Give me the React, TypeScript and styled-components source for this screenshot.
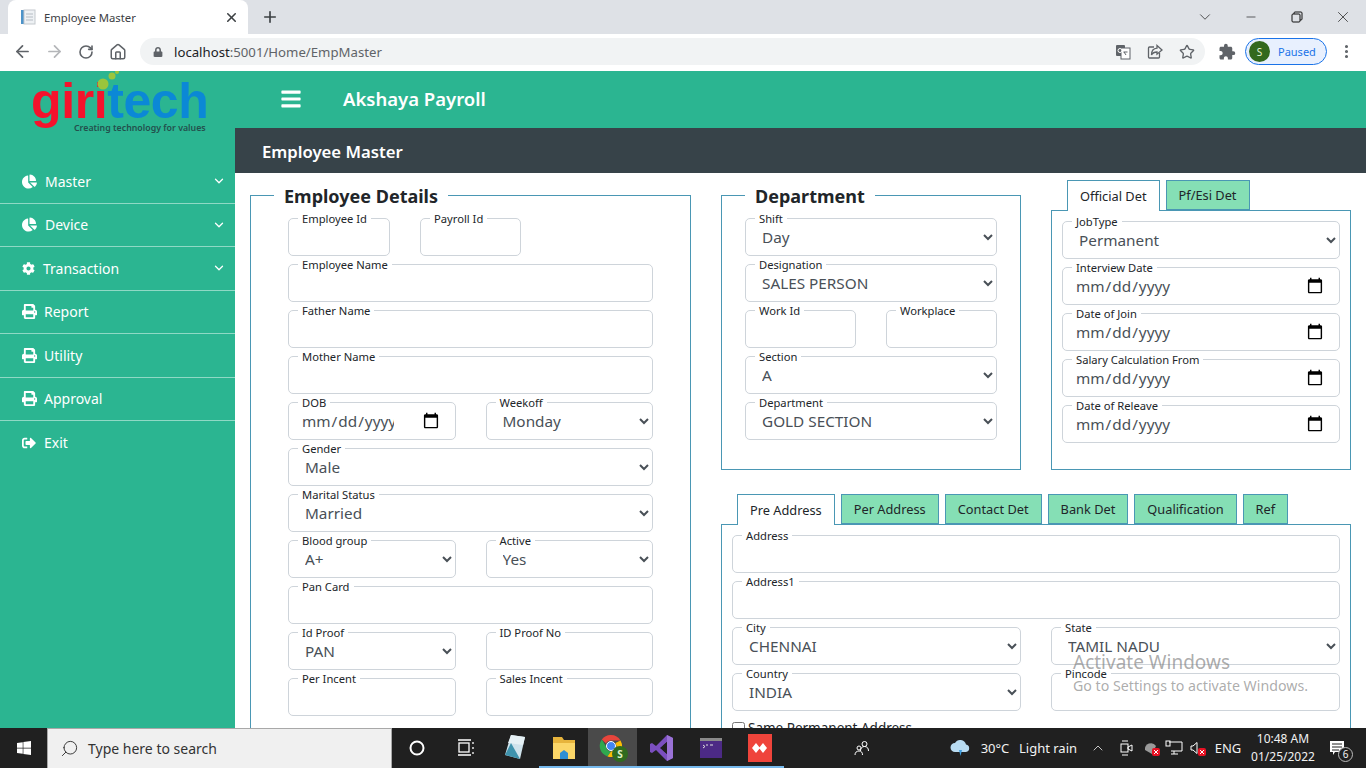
import React from 'react';
import styled, {createGlobalStyle} from 'styled-components';
import {FaBars, FaChartPie, FaCog, FaLock, FaPrint, FaSignOutAlt, FaWindows} from 'react-icons/fa';
import {MdExtension} from 'react-icons/md';
import {ArrowLeft, ArrowRight, ChevronDown, ChevronUp, Home, Minus, MoreVertical, Plus, RotateCw, Search, Star, X} from 'lucide-react';

const GREEN = '#2bb591';
const LINE = '#4a97b4';
const UI_FONT = '"Noto Sans", "Open Sans", sans-serif';

const GlobalStyle = createGlobalStyle`
  html, body {
    margin: 0;
    height: 100%;
    overflow: hidden;
    font-family: ${UI_FONT};
    background: white;
  }
  * {
    box-sizing: border-box;
  }
`;

const Frame = styled.div`
  position: relative;
  width: 1366px;
  height: 768px;
  display: flex;
  flex-direction: column;
  overflow: hidden;
`;

/* browser chrome */
const TabStrip = styled.div`
  height: 34px;
  background: #dee1e6;
  display: flex;
  align-items: center;
  padding-left: 8px;
`;

const BrowserTab = styled.div`
  width: 240px;
  height: 34px;
  background: white;
  border-radius: 8px 8px 0 0;
  display: flex;
  align-items: center;
  padding: 0 9px 0 12px;
  font-size: 11.3px;
  color: #3c4043;
  gap: 8px;
`;

const BrowserTabTitle = styled.span`
  flex: 1;
`;

const NewTab = styled.div`
  width: 44px;
  display: flex;
  justify-content: center;
  color: #3c4043;
`;

const WindowControls = styled.div`
  margin-left: auto;
  display: flex;
  color: #222;
`;

const WindowButton = styled.div`
  width: 46px;
  height: 34px;
  display: flex;
  align-items: center;
  justify-content: center;
`;

const Toolbar = styled.div`
  height: 37px;
  background: white;
  display: flex;
  align-items: center;
  padding: 0 0 2px 6px;
  color: #5f6368;
`;

const NavButton = styled.div<{$muted?: boolean}>`
  width: 32px;
  display: flex;
  justify-content: center;
  color: ${p => (p.$muted ? '#b4b6b9' : '#5f6368')};
`;

const Omnibox = styled.div`
  width: 1065px;
  height: 27px;
  margin-left: 6px;
  background: #f1f3f4;
  border-radius: 14px;
  display: flex;
  align-items: center;
  padding: 0 2px 0 13px;
  font-size: 13.2px;
  color: #5f6368;
`;

const Url = styled.span`
  margin-left: 11px;
  flex: 1;
`;

const UrlHost = styled.span`
  color: #202124;
`;

const OmniIcon = styled.div`
  width: 32px;
  display: flex;
  justify-content: center;
`;

const ExtensionIcon = styled.div`
  width: 40px;
  padding-left: 3px;
  display: flex;
  justify-content: center;
`;

const ProfilePill = styled.div`
  width: 82px;
  height: 27px;
  border: 1px solid #1a73e8;
  border-radius: 14px;
  background: #e8f0fe;
  display: flex;
  align-items: center;
  padding-left: 3px;
  gap: 8px;
  font-size: 11px;
  color: #1a73e8;
`;

const Avatar = styled.span`
  width: 21px;
  height: 21px;
  border-radius: 50%;
  background: #33691e;
  color: #e6f4d7;
  font-size: 10px;
  display: flex;
  align-items: center;
  justify-content: center;
`;

const MenuDots = styled.div`
  width: 38px;
  display: flex;
  justify-content: center;
`;

/* page */
const Body = styled.div`
  flex: 1;
  min-height: 0;
  display: flex;
`;

const Sidebar = styled.aside`
  width: 235px;
  flex-shrink: 0;
  background: ${GREEN};
  color: white;
`;

const Logo = styled.div`
  position: relative;
  height: 89px;
  padding: 3px 0 0 31px;
  font-family: "Liberation Sans", Arial, sans-serif;
`;

const LogoWord = styled.div`
  font-size: 50px;
  font-weight: bold;
  line-height: 48px;
  letter-spacing: -0.4px;
  margin-top: 3px;
`;

const LogoRed = styled.span`
  color: #f5122c;
`;

const LogoBlue = styled.span`
  color: #0b88d6;
`;

const LogoTag = styled.div`
  font-family: ${UI_FONT};
  font-size: 8.8px;
  line-height: 12px;
  color: #23504d;
  margin: -3px 0 0 43px;
  font-weight: 600;
  white-space: nowrap;
`;

const LogoDots = styled.svg`
  position: absolute;
  left: 92px;
  top: 0;
`;

const MenuList = styled.nav`
  display: flex;
  flex-direction: column;
`;

const MenuItem = styled.a<{$last?: boolean}>`
  height: 43.5px;
  display: flex;
  align-items: center;
  padding: 0 9px 0 22px;
  font-size: 14px;
  color: white;
  border-bottom: ${p => (p.$last ? 'none' : '1px solid #8fd9c5')};
`;

const MenuIcon = styled.span<{$gap: number}>`
  width: ${p => p.$gap}px;
  display: flex;
  align-items: center;
`;

const MenuText = styled.span`
  flex: 1;
`;

const Main = styled.main`
  flex: 1;
  min-width: 0;
  display: flex;
  flex-direction: column;
`;

const TopBar = styled.header`
  height: 57px;
  background: ${GREEN};
  color: white;
  display: flex;
  align-items: center;
  padding: 0 0 2px 45px;
  font-size: 18.5px;
  font-weight: 600;
`;

const TopTitle = styled.span`
  margin-left: 41px;
`;

const TitleBar = styled.div`
  height: 45px;
  background: #374349;
  color: white;
  display: flex;
  align-items: center;
  padding: 2px 0 0 27px;
  font-size: 16.7px;
  font-weight: 600;
`;

const Content = styled.div`
  flex: 1;
  min-height: 0;
  overflow: hidden;
  background: white;
  padding: 7px 0 0 15px;
  display: grid;
  grid-template-columns: 441px 300px 300px;
  grid-template-rows: 290px 1fr;
  column-gap: 30px;
  row-gap: 24px;
  align-content: start;
`;

const Section = styled.fieldset<{$left: number; $right: number}>`
  margin: 2px 0 0;
  min-width: 0;
  border: 1px solid ${LINE};
  padding: 9px ${p => p.$right}px 0 ${p => p.$left}px;
`;

const EmployeeSection = styled(Section)`
  grid-row: 1 / span 2;
  height: 640px;
`;

const SectionTitle = styled.legend<{$offset: number}>`
  margin-left: ${p => p.$offset}px;
  padding: 1px 10px 0;
  font-size: 18px;
  line-height: 26px;
  font-weight: 700;
  color: #212529;
`;

const Rows = styled.div`
  display: grid;
  grid-auto-rows: 38px;
  row-gap: 8px;
`;

const Row = styled.div<{$gap: number}>`
  display: flex;
  gap: ${p => p.$gap}px;
`;

const Field = styled.div<{$width?: number}>`
  position: relative;
  height: 38px;
  border: 1px solid #ced4da;
  border-radius: 5px;
  background: white;
  flex: ${p => (p.$width ? `0 0 ${p.$width}px` : '1 1 0')};
  min-width: 0;
`;

const FieldLabel = styled.label`
  position: absolute;
  top: -8px;
  left: 9px;
  padding: 0 4px;
  background: white;
  font-size: 11.2px;
  line-height: 15px;
  color: #212529;
  white-space: nowrap;
`;

const TextBox = styled.input`
  width: 100%;
  height: 100%;
  border: 0;
  outline: 0;
  background: transparent;
  padding: 0 12px;
  font-family: ${UI_FONT};
  font-size: 15.3px;
  color: #495057;
`;

const DateBox = styled(TextBox)`
  padding: 0 15px 0 12px;

  &::-webkit-calendar-picker-indicator {
    width: 18px;
    height: 18px;
    padding: 0;
    margin-left: 28px;
  }
`;

const SelectBox = styled.select`
  width: 100%;
  height: 100%;
  border: 0;
  outline: 0;
  background: transparent;
  padding: 0 8px 0 12px;
  font-family: ${UI_FONT};
  font-size: 15.3px;
  color: #495057;
`;

const TabColumn = styled.div<{$span?: number}>`
  min-width: 0;
  grid-column: ${p => (p.$span ? `span ${p.$span}` : 'auto')};
`;

const TabBar = styled.div<{$indent: number}>`
  position: relative;
  z-index: 1;
  display: flex;
  gap: 6px;
  padding-left: ${p => p.$indent}px;
  height: 31px;
  margin-bottom: -1px;
`;

const TabItem = styled.div<{$active?: boolean}>`
  height: ${p => (p.$active ? '31px' : '30px')};
  padding: 0 12px ${p => (p.$active ? '1px' : '0')};
  display: flex;
  align-items: center;
  font-size: 12.8px;
  color: #212529;
  background: ${p => (p.$active ? 'white' : '#85dfb5')};
  border: 1px solid ${LINE};
  border-bottom: ${p => (p.$active ? '0' : `1px solid ${LINE}`)};
`;

const TabPanel = styled.div`
  border: 1px solid ${LINE};
  padding: 10px 10px 0;
  height: 260px;
`;

const CheckRow = styled.label`
  display: flex;
  align-items: center;
  gap: 3px;
  margin-top: 8px;
  font-size: 13.5px;
  color: #212529;
`;

const CheckBox = styled.input`
  width: 13px;
  height: 13px;
  margin: 0;
`;

/* taskbar */
const Taskbar = styled.footer`
  height: 40px;
  flex-shrink: 0;
  background: #202020;
  color: white;
  display: flex;
  align-items: center;
  position: relative;
  z-index: 2;
`;

const StartButton = styled.div`
  width: 47px;
  display: flex;
  justify-content: center;
`;

const SearchBox = styled.div`
  width: 345px;
  height: 40px;
  background: #f0f0f0;
  border: 1px solid #a8a8a8;
  border-bottom: 0;
  display: flex;
  align-items: center;
  padding-left: 12px;
  gap: 9px;
  font-size: 14px;
  color: #333;
`;

const FlippedIcon = styled.span`
  display: flex;
  transform: scaleX(-1);
`;

const TaskButton = styled.div<{$open?: boolean; $active?: boolean}>`
  width: 49px;
  height: 40px;
  display: flex;
  align-items: center;
  justify-content: center;
  background: ${p => (p.$active ? '#4a4a4a' : 'transparent')};
  border-bottom: 2px solid ${p => (p.$open ? '#76b9ed' : 'transparent')};
  padding-top: 2px;
`;

const TrayItem = styled.div<{$width: number; $before?: number}>`
  width: ${p => p.$width}px;
  margin-left: ${p => p.$before ?? 0}px;
  display: flex;
  justify-content: center;
  align-items: center;
  flex-shrink: 0;
  font-size: 13px;
  color: #f2f2f2;
  white-space: nowrap;
`;

const ClockText = styled.div`
  display: flex;
  flex-direction: column;
  align-items: center;
  font-size: 12px;
  line-height: 18px;
`;

const NotifyBadge = styled.span`
  position: absolute;
  right: -8px;
  bottom: -6px;
  width: 15px;
  height: 15px;
  border-radius: 50%;
  background: #202020;
  border: 1px solid #bbb;
  font-size: 10px;
  display: flex;
  align-items: center;
  justify-content: center;
`;

const NotifyIcon = styled.span`
  position: relative;
  display: flex;
`;

const Watermark = styled.div`
  position: absolute;
  left: 1073px;
  top: 649px;
  color: rgba(120, 120, 120, 0.62);
  pointer-events: none;
  font-size: 14.2px;
  line-height: 19px;
  z-index: 1;
`;

const WatermarkTitle = styled.div`
  font-size: 19px;
  line-height: 27px;
`;

/* small drawings */
const FavIcon = () => (
  <svg width="16" height="16" viewBox="0 0 16 16">
    <rect x="1" y="1" width="5" height="14" fill="#4c93c9" />
    <rect x="4" y="1" width="11" height="14" fill="#eef1f4" stroke="#c3c8cd" />
    <path d="M6 5h7M6 8h7M6 11h7" stroke="#b5bcc3" />
  </svg>
);

const RestoreIcon = () => (
  <svg width="12" height="12" viewBox="0 0 12 12" fill="none" stroke="#111" strokeWidth="1">
    <rect x="1" y="3" width="8" height="8" rx="1" />
    <path d="M3 3V2a1 1 0 0 1 1-1h6a1 1 0 0 1 1 1v6a1 1 0 0 1-1 1H9" />
  </svg>
);

const TranslateIcon = () => (
  <svg width="16" height="16" viewBox="0 0 16 16">
    <rect x="1" y="1" width="9" height="11" fill="#5f6368" rx="1" />
    <rect x="6" y="4" width="9" height="11" fill="white" stroke="#5f6368" />
    <circle cx="5" cy="6.5" r="2" fill="none" stroke="white" />
    <path d="M8.5 8h4M11 11l-2-3" stroke="#5f6368" fill="none" />
  </svg>
);

const ShareIcon = () => (
  <svg width="16" height="16" viewBox="0 0 16 16" fill="none" stroke="#5f6368" strokeWidth="1.3">
    <path d="M7 3H2.5a1 1 0 0 0-1 1v9a1 1 0 0 0 1 1h9a1 1 0 0 0 1-1V9" />
    <path d="M10 1.5 15 6l-5 4.2V8C7 8 5.5 9 4.5 11c0-4 2-6.5 5.5-6.8z" />
  </svg>
);

const TaskViewIcon = () => (
  <svg width="18" height="20" viewBox="0 0 18 20" fill="none" stroke="white" strokeWidth="1.3">
    <rect x="2" y="5" width="10" height="9" />
    <path d="M1 2h13M1 17h13M16 4v2M16 9v2M16 14v2" />
  </svg>
);

const NotepadIcon = () => (
  <svg width="24" height="30" viewBox="0 0 24 30">
    <path d="M8 2 22 4 17 26 2 22z" fill="#cfe3ec" />
    <path d="M8 2 22 4 20 12 5 10z" fill="#e6f1f5" />
    <path d="M2 22 8 10 17 26z" fill="#3f93ad" />
  </svg>
);

const FolderIcon = () => (
  <svg width="22" height="26" viewBox="0 0 22 26">
    <path d="M0 2h9l2 3h11v19H0z" fill="#e7b43c" />
    <rect x="0" y="8" width="22" height="16" fill="#fbd668" />
    <path d="M7 24v-6l4-3 4 3v6z" fill="#2f8fd3" />
  </svg>
);

const ChromeIcon = () => (
  <svg width="32" height="32" viewBox="0 0 32 32">
    <path d="M14 3a11 11 0 0 1 9.5 5.500H14a5.500 5.500 0 0 0-5 3L4.800 7.500A11 11 0 0 1 14 3z" fill="#e8453c" />
    <path d="M4.800 7.500 9 14.500a5.500 5.500 0 0 0 5 5l-3.500 4.900A11 11 0 0 1 4.800 7.500z" fill="#2fa84f" />
    <path d="M23.500 8.500A11 11 0 0 1 10.500 24.400L14 19.500a5.500 5.500 0 0 0 4.500-8.500z" fill="#fbbc05" />
    <circle cx="14" cy="14" r="4.500" fill="#4285f4" stroke="white" />
    <circle cx="23" cy="22" r="8" fill="#2f6b1f" />
    <text x="23" y="25.500" fontSize="10" fontWeight="bold" fill="#dff0c8" textAnchor="middle">S</text>
  </svg>
);

const StudioIcon = () => (
  <svg width="24" height="28" viewBox="0 0 24 28">
    <path d="M17 1 23 4v20l-6 3L6 16 2 19 0 18V10l2-1 4 3z" fill="#7b4fc0" />
    <path d="M17 8v12l-7-6z" fill="#202020" />
    <path d="M17 1 23 4v20l-6 3z" fill="#9a72d6" />
    <path d="M17 8v12l-4-3.500v-5z" fill="#202020" />
  </svg>
);

const TerminalIcon = () => (
  <svg width="22" height="20" viewBox="0 0 22 20">
    <rect width="22" height="20" fill="#8a8a8a" />
    <rect y="3" width="22" height="17" fill="#4c2a85" />
    <path d="M3 7l2 1.500L3 10M6 7h2M10 7h3" stroke="#ddd" fill="none" />
  </svg>
);

const AnyDeskIcon = () => (
  <svg width="24" height="28" viewBox="0 0 24 28">
    <rect width="24" height="28" fill="#ef443b" />
    <path d="M8 9 12 14 8 19 4 14z M15 9 19 14 15 19 11 14z" fill="white" />
  </svg>
);

const CortanaIcon = () => (
  <svg width="16" height="16" viewBox="0 0 16 16" fill="none" stroke="white" strokeWidth="2">
    <circle cx="8" cy="8" r="6.500" />
  </svg>
);

const PeopleIcon = () => (
  <svg width="16" height="16" viewBox="0 0 16 16" fill="none" stroke="white" strokeWidth="1">
    <circle cx="10.500" cy="4" r="2.500" />
    <path d="M6.500 11c0-3 1.500-4.500 4-4.500s4 1.500 4 4.500" />
    <circle cx="5" cy="8" r="2" />
    <path d="M1 15c0-2.500 1.500-4 4-4s3.500 1.500 3.500 4" />
  </svg>
);

const WeatherIcon = () => (
  <svg width="22" height="18" viewBox="0 0 22 18">
    <path d="M6 13a4.500 4.500 0 0 1 0-9 6 6 0 0 1 11 1.500A3.800 3.800 0 0 1 17 13z" fill="#b9dcf2" />
    <path d="M10 11h3l-1.500 6z" fill="#3f9ee0" />
  </svg>
);

const MeetIcon = () => (
  <svg width="14" height="20" viewBox="0 0 14 20" fill="none" stroke="white" strokeWidth="1">
    <rect x="2" y="6" width="7" height="8" />
    <path d="M9 9l4-2v6l-4-2zM3 3h6M3 17h6" />
  </svg>
);

const RedCross = () => (
  <>
    <rect x="9" y="9" width="8" height="8" rx="2" fill="#e81123" />
    <path d="M11 11l4 4M15 11l-4 4" stroke="white" />
  </>
);

const NetworkIcon = () => (
  <svg width="18" height="18" viewBox="0 0 18 18">
    <path d="M2 11a6 6 0 0 1 11-4l-4 8z" fill="#9a9a9a" />
    <RedCross />
  </svg>
);

const DesktopIcon = () => (
  <svg width="18" height="16" viewBox="0 0 18 16" fill="none" stroke="white" strokeWidth="1">
    <path d="M4 2h13v9H6M9 11v3M6 14h7" />
    <rect x="1" y="1" width="4" height="5" />
  </svg>
);

const VolumeIcon = () => (
  <svg width="18" height="18" viewBox="0 0 18 18">
    <path d="M2 7h2l4-3.500v11L4 11H2z" fill="none" stroke="white" />
    <RedCross />
  </svg>
);

const NotifySvg = () => (
  <svg width="16" height="15" viewBox="0 0 16 15">
    <path d="M1 0h14v11H6l-2 3v-3H1z" fill="white" />
    <path d="M3 3h10M3 6h10M3 9h7" stroke="#202020" />
  </svg>
);

const menuItems = [
  {label: 'Master', icon: <FaChartPie size={15} />, gap: 23, arrow: true},
  {label: 'Device', icon: <FaChartPie size={15} />, gap: 23, arrow: true},
  {label: 'Transaction', icon: <FaCog size={13} />, gap: 21, arrow: true},
  {label: 'Report', icon: <FaPrint size={15} />, gap: 22},
  {label: 'Utility', icon: <FaPrint size={15} />, gap: 22},
  {label: 'Approval', icon: <FaPrint size={15} />, gap: 22},
  {label: 'Exit', icon: <FaSignOutAlt size={14} />, gap: 22},
];

const Text: React.FC<{label: string; width?: number}> = ({label, width}) => (
  <Field $width={width}>
    <FieldLabel>{label}</FieldLabel>
    <TextBox type="text" />
  </Field>
);

const DateField: React.FC<{label: string; width?: number}> = ({label, width}) => (
  <Field $width={width}>
    <FieldLabel>{label}</FieldLabel>
    <DateBox type="date" />
  </Field>
);

const Choice: React.FC<{label: string; value: string; width?: number}> = ({label, value, width}) => (
  <Field $width={width}>
    <FieldLabel>{label}</FieldLabel>
    <SelectBox defaultValue={value}>
      <option>{value}</option>
    </SelectBox>
  </Field>
);

const App: React.FC = () => {
  return (
    <Frame>
      <GlobalStyle />
      <TabStrip>
        <BrowserTab>
          <FavIcon />
          <BrowserTabTitle>Employee Master</BrowserTabTitle>
          <X size={15} strokeWidth={2.5} />
        </BrowserTab>
        <NewTab><Plus size={18} strokeWidth={2.2} /></NewTab>
        <WindowControls>
          <WindowButton><ChevronDown size={18} strokeWidth={1} /></WindowButton>
          <WindowButton><Minus size={14} strokeWidth={1.2} /></WindowButton>
          <WindowButton><RestoreIcon /></WindowButton>
          <WindowButton><X size={18} strokeWidth={1} /></WindowButton>
        </WindowControls>
      </TabStrip>
      <Toolbar>
        <NavButton><ArrowLeft size={19} strokeWidth={2.2} /></NavButton>
        <NavButton $muted><ArrowRight size={19} strokeWidth={2.2} /></NavButton>
        <NavButton><RotateCw size={16} strokeWidth={2.4} /></NavButton>
        <NavButton><Home size={18} strokeWidth={2} /></NavButton>
        <Omnibox>
          <FaLock size={10} />
          <Url><UrlHost>localhost</UrlHost>:5001/Home/EmpMaster</Url>
          <OmniIcon><TranslateIcon /></OmniIcon>
          <OmniIcon><ShareIcon /></OmniIcon>
          <OmniIcon><Star size={16} strokeWidth={2} /></OmniIcon>
        </Omnibox>
        <ExtensionIcon><MdExtension size={18} /></ExtensionIcon>
        <ProfilePill><Avatar>S</Avatar>Paused</ProfilePill>
        <MenuDots><MoreVertical size={17} strokeWidth={2.4} /></MenuDots>
      </Toolbar>

      <Body>
        <Sidebar>
          <Logo>
            <LogoDots width="30" height="24" viewBox="0 0 30 24">
              <circle cx="11" cy="13" r="5.500" fill="#9ac53c" />
              <circle cx="20" cy="5" r="3.500" fill="#9ac53c" />
              <circle cx="25" cy="1" r="2" fill="#9ac53c" />
            </LogoDots>
            <LogoWord><LogoRed>giri</LogoRed><LogoBlue>tech</LogoBlue></LogoWord>
            <LogoTag>Creating technology for values</LogoTag>
          </Logo>
          <MenuList>
            {menuItems.map((item, i) => (
              <MenuItem key={item.label} $last={i === menuItems.length - 1}>
                <MenuIcon $gap={item.gap}>{item.icon}</MenuIcon>
                <MenuText>{item.label}</MenuText>
                {item.arrow && <ChevronDown size={14} strokeWidth={2.2} />}
              </MenuItem>
            ))}
          </MenuList>
        </Sidebar>

        <Main>
          <TopBar>
            <FaBars size={22} />
            <TopTitle>Akshaya Payroll</TopTitle>
          </TopBar>
          <TitleBar>Employee Master</TitleBar>
          <Content>
            <EmployeeSection $left={37} $right={37}>
              <SectionTitle $offset={-14}>Employee Details</SectionTitle>
              <Rows>
                <Row $gap={30}>
                  <Text label="Employee Id" width={102} />
                  <Text label="Payroll Id" width={101} />
                </Row>
                <Text label="Employee Name" />
                <Text label="Father Name" />
                <Text label="Mother Name" />
                <Row $gap={30}>
                  <DateField label="DOB" />
                  <Choice label="Weekoff" value="Monday" />
                </Row>
                <Choice label="Gender" value="Male" />
                <Choice label="Marital Status" value="Married" />
                <Row $gap={30}>
                  <Choice label="Blood group" value="A+" />
                  <Choice label="Active" value="Yes" />
                </Row>
                <Text label="Pan Card" />
                <Row $gap={30}>
                  <Choice label="Id Proof" value="PAN" />
                  <Text label="ID Proof No" />
                </Row>
                <Row $gap={30}>
                  <Text label="Per Incent" />
                  <Text label="Sales Incent" />
                </Row>
              </Rows>
            </EmployeeSection>

            <Section $left={23} $right={23}>
              <SectionTitle $offset={0}>Department</SectionTitle>
              <Rows>
                <Choice label="Shift" value="Day" />
                <Choice label="Designation" value="SALES PERSON" />
                <Row $gap={30}>
                  <Text label="Work Id" />
                  <Text label="Workplace" />
                </Row>
                <Choice label="Section" value="A" />
                <Choice label="Department" value="GOLD SECTION" />
              </Rows>
            </Section>

            <TabColumn>
              <TabBar $indent={16}>
                <TabItem $active>Official Det</TabItem>
                <TabItem>Pf/Esi Det</TabItem>
              </TabBar>
              <TabPanel>
                <Rows>
                  <Choice label="JobType" value="Permanent" />
                  <DateField label="Interview Date" />
                  <DateField label="Date of Join" />
                  <DateField label="Salary Calculation From" />
                  <DateField label="Date of Releave" />
                </Rows>
              </TabPanel>
            </TabColumn>

            <TabColumn $span={2}>
              <TabBar $indent={16}>
                <TabItem $active>Pre Address</TabItem>
                <TabItem>Per Address</TabItem>
                <TabItem>Contact Det</TabItem>
                <TabItem>Bank Det</TabItem>
                <TabItem>Qualification</TabItem>
                <TabItem>Ref</TabItem>
              </TabBar>
              <TabPanel>
                <Rows>
                  <Text label="Address" />
                  <Text label="Address1" />
                  <Row $gap={30}>
                    <Choice label="City" value="CHENNAI" />
                    <Choice label="State" value="TAMIL NADU" />
                  </Row>
                  <Row $gap={30}>
                    <Choice label="Country" value="INDIA" />
                    <Text label="Pincode" />
                  </Row>
                </Rows>
                <CheckRow><CheckBox type="checkbox" />Same Permanent Address</CheckRow>
              </TabPanel>
            </TabColumn>
          </Content>
        </Main>
      </Body>

      <Taskbar>
        <StartButton><FaWindows size={16} /></StartButton>
        <SearchBox>
          <FlippedIcon><Search size={19} strokeWidth={1.2} /></FlippedIcon>
          Type here to search
        </SearchBox>
        <TaskButton><CortanaIcon /></TaskButton>
        <TaskButton><TaskViewIcon /></TaskButton>
        <TaskButton><NotepadIcon /></TaskButton>
        <TaskButton $open><FolderIcon /></TaskButton>
        <TaskButton $open $active><ChromeIcon /></TaskButton>
        <TaskButton $open><StudioIcon /></TaskButton>
        <TaskButton $open><TerminalIcon /></TaskButton>
        <TaskButton $open><AnyDeskIcon /></TaskButton>
        <TrayItem $width={36} $before={60}><PeopleIcon /></TrayItem>
        <TrayItem $width={24} $before={68}><WeatherIcon /></TrayItem>
        <TrayItem $width={32} $before={7}>30°C</TrayItem>
        <TrayItem $width={62} $before={6}>Light rain</TrayItem>
        <TrayItem $width={20} $before={9}><ChevronUp size={16} strokeWidth={1.2} /></TrayItem>
        <TrayItem $width={24} $before={6}><MeetIcon /></TrayItem>
        <TrayItem $width={22} $before={3}><NetworkIcon /></TrayItem>
        <TrayItem $width={22}><DesktopIcon /></TrayItem>
        <TrayItem $width={24} $before={1}><VolumeIcon /></TrayItem>
        <TrayItem $width={30} $before={3}>ENG</TrayItem>
        <TrayItem $width={56} $before={12}>
          <ClockText>
            <span>10:48 AM</span>
            <span>01/25/2022</span>
          </ClockText>
        </TrayItem>
        <TrayItem $width={20} $before={16}>
          <NotifyIcon><NotifySvg /><NotifyBadge>6</NotifyBadge></NotifyIcon>
        </TrayItem>
      </Taskbar>

      <Watermark>
        <WatermarkTitle>Activate Windows</WatermarkTitle>
        Go to Settings to activate Windows.
      </Watermark>
    </Frame>
  );
};

export default App;
